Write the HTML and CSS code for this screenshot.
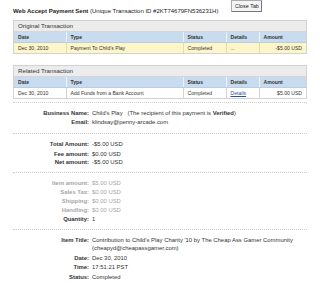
FILE: index.html
```html
<!DOCTYPE html>
<html>
<head>
<meta charset="utf-8">
<link rel="stylesheet" href="styles.css">
</head>
<body>
<div class="page">
  <div class="topbar">
    <div class="title"><b>Web Accept Payment Sent</b> (Unique Transaction ID #2KT74679FN536231H)</div>
    <button class="close">Close Tab</button>
  </div>

  <div class="box">
    <div class="box-title">Original Transaction</div>
    <table class="tx">
      <colgroup><col class="c1"><col class="c2"><col class="c3"><col class="c4"><col class="c5"></colgroup>
      <tr class="head"><th>Date</th><th>Type</th><th>Status</th><th>Details</th><th>Amount</th></tr>
      <tr class="yellow"><td>Dec 30, 2010</td><td>Payment To Child's Play</td><td>Completed</td><td>...</td><td class="amt">-$5.00 USD</td></tr>
    </table>
  </div>

  <div class="box box-related">
    <div class="box-title">Related Transaction</div>
    <table class="tx">
      <colgroup><col class="c1"><col class="c2"><col class="c3"><col class="c4"><col class="c5"></colgroup>
      <tr class="head"><th>Date</th><th>Type</th><th>Status</th><th>Details</th><th>Amount</th></tr>
      <tr><td>Dec 30, 2010</td><td>Add Funds from a Bank Account</td><td>Completed</td><td><a href="#">Details</a></td><td class="amt">$5.00 USD</td></tr>
    </table>
  </div>

  <div class="section s1">
    <div class="row"><span class="lbl">Business Name:</span><span class="val">Child's Play &nbsp; (The recipient of this payment is <b>Verified</b>)</span></div>
    <div class="row"><span class="lbl">Email:</span><span class="val">klindsay@penny-arcade.com</span></div>
  </div>

  <div class="section s2">
    <div class="row"><span class="lbl">Total Amount:</span><span class="val">-$5.00 USD</span></div>
    <div class="row"><span class="lbl">Fee amount:</span><span class="val">$0.00 USD</span></div>
    <div class="row tight"><span class="lbl">Net amount:</span><span class="val">-$5.00 USD</span></div>
  </div>

  <div class="section s3">
    <div class="row muted"><span class="lbl">Item amount:</span><span class="val">$5.00 USD</span></div>
    <div class="row muted"><span class="lbl">Sales Tax:</span><span class="val">$0.00 USD</span></div>
    <div class="row muted"><span class="lbl">Shipping:</span><span class="val">$0.00 USD</span></div>
    <div class="row muted"><span class="lbl">Handling:</span><span class="val">$0.00 USD</span></div>
    <div class="row"><span class="lbl">Quantity:</span><span class="val">1</span></div>
  </div>

  <div class="section s4">
    <div class="row"><span class="lbl">Item Title:</span><span class="val">Contribution to Child's Play Charity '10 by The Cheap Ass Gamer Community (cheapyd@cheapassgamer.com)</span></div>
    <div class="row"><span class="lbl">Date:</span><span class="val">Dec 30, 2010</span></div>
    <div class="row"><span class="lbl">Time:</span><span class="val">17:51:21 PST</span></div>
    <div class="row"><span class="lbl">Status:</span><span class="val">Completed</span></div>
  </div>
</div>
</body>
</html>
```

FILE: styles.css
```css
html, body {
  margin: 0;
  padding: 0;
  background: #fff;
}
body {
  font-family: "Liberation Sans", Arial, sans-serif;
  color: #333;
  font-size: 5.9px;
}
.page {
  width: 294px;
  padding-left: 13px;
}
.topbar {
  display: flex;
  align-items: flex-start;
  height: 20px;
}
.title {
  margin-top: 8px;
  font-size: 6px;
  line-height: 6px;
  color: #222;
  white-space: nowrap;
}
.title b { color: #222; }
.close {
  margin-left: 13px;
  margin-top: 0;
  height: 12px;
  width: 31px;
  padding: 0;
  font-family: "Liberation Sans", Arial, sans-serif;
  font-size: 5.4px;
  color: #222;
  background: #f4f4f4;
  border: 1px solid #aaa;
  border-right-color: #777;
  border-bottom-color: #777;
  border-radius: 1px;
}
.box {
  border: 1px solid #d2d2d2;
  background: #fff;
}
.box-related {
  margin-top: 11px;
}
.box-title {
  height: 10px;
  line-height: 10px;
  padding-left: 4px;
  background: #ececec;
  font-size: 6.2px;
  color: #333;
  border-bottom: 1px solid #d6d6d6;
}
.tx {
  width: 100%;
  border-collapse: collapse;
  table-layout: fixed;
  font-size: 5.1px;
}
.c1 { width: 52px; }
.c2 { width: 117px; }
.c3 { width: 43px; }
.c4 { width: 33px; }
.c5 { width: auto; }
.tx th, .tx td {
  height: 10px;
  padding: 0 0 0 4px;
  text-align: left;
  white-space: nowrap;
  overflow: hidden;
}
.tx th {
  background: #c9dbef;
  font-weight: bold;
  color: #333;
  border-left: 1px solid #eef3fa;
  border-bottom: 1px solid #b9cde4;
}
.tx th:first-child, .tx td:first-child { border-left: none; }
.tx td {
  border-left: 1px solid #d4d4d4;
  color: #333;
}
.tx tr.yellow td {
  background: #fdf6c9;
  border-left-color: #e4dcae;
}
.tx td.amt {
  text-align: right;
  padding: 0 4px 0 0;
}
.tx a {
  color: #2a4f9c;
  text-decoration: underline;
}
.section {
  border-top: 1px dotted #cdcdcd;
  display: flex;
  flex-direction: column;
  gap: 1px;
}
.s1 { margin-top: 3px; padding: 6px 0 7px; }
.s2 { padding: 6px 0 5px; }
.s3 { padding: 6px 0 6px; }
.s4 { padding: 6px 0 0; gap: 1.5px; }
.row {
  display: grid;
  grid-template-columns: 76px 1fr;
  column-gap: 3px;
  line-height: 8px;
  font-size: 5.9px;
}
.row.tight { margin-top: -2px; }
.lbl {
  text-align: right;
  font-weight: bold;
  color: #333;
}
.val { color: #333; }
.row.muted .lbl, .row.muted .val { color: #a6a6a6; }
.s2 .row { margin-bottom: 1px; }
```
